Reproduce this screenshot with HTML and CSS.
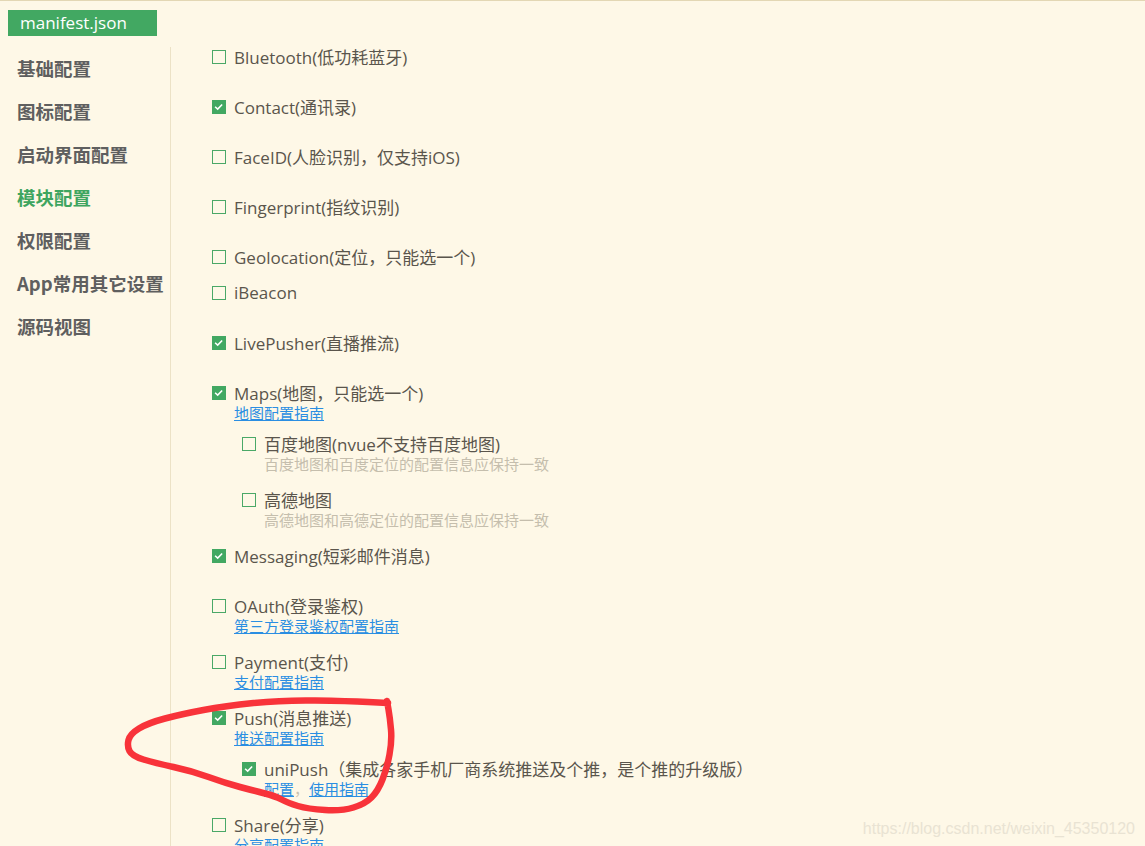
FILE: index.html
```html
<!DOCTYPE html>
<html lang="zh-CN">
<head>
    <meta charset="UTF-8">
    <title>manifest.json</title>
    <link rel="stylesheet" href="styles.css">
</head>
<body>
    <div class="topbar">
        <span class="tab">manifest.json</span>
    </div>

    <div class="main">
        <nav class="side">
            <div class="side-item">基础配置</div>
            <div class="side-item">图标配置</div>
            <div class="side-item">启动界面配置</div>
            <div class="side-item active">模块配置</div>
            <div class="side-item">权限配置</div>
            <div class="side-item">App常用其它设置</div>
            <div class="side-item">源码视图</div>
        </nav>

        <div class="content">
            <div class="item plain">
                <label class="title"><span class="box"></span>Bluetooth(低功耗蓝牙)</label>
            </div>
            <div class="item plain">
                <label class="title"><span class="box on"></span>Contact(通讯录)</label>
            </div>
            <div class="item plain">
                <label class="title"><span class="box"></span>FaceID(人脸识别，仅支持iOS)</label>
            </div>
            <div class="item plain">
                <label class="title"><span class="box"></span>Fingerprint(指纹识别)</label>
            </div>
            <div class="item">
                <label class="title"><span class="box"></span>Geolocation(定位，只能选一个)</label>
            </div>
            <div class="item plain">
                <label class="title"><span class="box"></span>iBeacon</label>
            </div>
            <div class="item plain">
                <label class="title"><span class="box on"></span>LivePusher(直播推流)</label>
            </div>
            <div class="item">
                <label class="title"><span class="box on"></span>Maps(地图，只能选一个)</label>
                <div class="sub"><a href="#">地图配置指南</a></div>
                <div class="children">
                    <div class="item">
                        <label class="title"><span class="box"></span>百度地图(nvue不支持百度地图)</label>
                        <div class="sub desc">百度地图和百度定位的配置信息应保持一致</div>
                    </div>
                    <div class="item">
                        <label class="title"><span class="box"></span>高德地图</label>
                        <div class="sub desc">高德地图和高德定位的配置信息应保持一致</div>
                    </div>
                </div>
            </div>
            <div class="item plain">
                <label class="title"><span class="box on"></span>Messaging(短彩邮件消息)</label>
            </div>
            <div class="item">
                <label class="title"><span class="box"></span>OAuth(登录鉴权)</label>
                <div class="sub"><a href="#">第三方登录鉴权配置指南</a></div>
            </div>
            <div class="item">
                <label class="title"><span class="box"></span>Payment(支付)</label>
                <div class="sub"><a href="#">支付配置指南</a></div>
            </div>
            <div class="item">
                <label class="title"><span class="box on"></span>Push(消息推送)</label>
                <div class="sub"><a href="#">推送配置指南</a></div>
                <div class="children">
                    <div class="item">
                        <label class="title"><span class="box on"></span>uniPush（集成各家手机厂商系统推送及个推，是个推的升级版）</label>
                        <div class="sub"><a href="#">配置</a><span class="sep">，</span><a href="#">使用指南</a></div>
                    </div>
                </div>
            </div>
            <div class="item">
                <label class="title"><span class="box"></span>Share(分享)</label>
                <div class="sub"><a href="#">分享配置指南</a></div>
            </div>
        </div>
    </div>

    <!-- hand drawn mark over the Push block -->
    <svg class="mark" width="1145" height="846" viewBox="0 0 1145 846">
        <path d="M388,702 L368,701 Q348,700 315,699.5 Q282,699 253.5,702 Q225,705 203.5,709 Q182,713 165,717.5 Q148,722 139,727.5 Q130,733 128.5,739 Q127,745 129.5,750 Q132,755 143.5,758.5 Q155,762 173.5,766 Q192,770 208.5,776 Q225,782 240,786 Q255,790 265,792.5 Q275,795 281.5,798.5 Q288,802 298,805 Q308,808 325,809 Q342,810 353.5,806.5 Q365,803 371.5,796.5 Q378,790 382.5,778.5 Q387,767 389.5,753.5 Q392,740 391,728.5 Q390,717 388.5,708.5 L387,700"
              fill="none" stroke="#f8333a" stroke-width="6.5" stroke-linecap="round" stroke-linejoin="round"/>
    </svg>

    <div class="watermark">https://blog.csdn.net/weixin_45350120</div>
</body>
</html>
```

FILE: styles.css
```css
html, body {
    margin: 0;
    height: 100%;
    overflow: hidden;
}
body {
    position: relative;
    background-color: #fef8e7;
    border-top: 1px solid #e3d7b4;
    font-family: "Open Sans", "Noto Sans CJK SC", sans-serif;
    color: #5a554c;
    box-sizing: border-box;
}
.topbar {
    padding: 9px 0 10px 8px;
    height: 27px;
}
.tab {
    display: inline-block;
    box-sizing: border-box;
    width: 149px;
    height: 26px;
    line-height: 26px;
    padding-left: 12px;
    background-color: #42a862;
    color: #fff;
    font-size: 17px;
}
.main {
    display: flex;
}
.side {
    width: 171px;
    box-sizing: border-box;
    padding-left: 17px;
    border-right: 1px solid #ece2c6;
    min-height: 800px;
}
.side-item {
    font-family: "Noto Sans CJK SC", sans-serif;
    font-weight: bold;
    font-size: 18.5px;
    line-height: 43px;
    color: #5f5f5f;
    white-space: nowrap;
}
.side-item.active {
    color: #3ea55f;
}
.content {
    margin-top: -2px;
    padding-left: 41px;
}
.item {
    margin-bottom: 14px;
}
.item.plain {
    margin-bottom: 28px;
}
.title {
    display: flex;
    align-items: center;
    gap: 8px;
    height: 22px;
    font-size: 17px;
    white-space: nowrap;
}
.box {
    flex: none;
    width: 14px;
    height: 14px;
    box-sizing: border-box;
    border: 1.5px solid #4aa867;
    margin-top: 1px;
}
.box.on {
    background-color: #42a862;
    border-color: #42a862;
    background-image: url("data:image/svg+xml;utf8,<svg xmlns='http://www.w3.org/2000/svg' width='14' height='14'><polyline points='3.5,7 6,9.3 10.3,4.8' fill='none' stroke='white' stroke-width='1.5'/></svg>");
    background-position: -1.5px -1.5px;
    background-repeat: no-repeat;
}
.sub {
    padding-left: 22px;
    font-size: 15px;
    line-height: 20px;
    white-space: nowrap;
}
.sub a {
    color: #2a8ee2;
}
.sep {
    color: #c9c2b0;
}
.desc {
    color: #c5bead;
}
.children {
    margin-top: 9px;
    padding-left: 30px;
}
.mark {
    position: absolute;
    top: 0;
    left: 0;
    pointer-events: none;
}
.watermark {
    position: absolute;
    right: 10px;
    bottom: 8px;
    font-family: "Liberation Sans", Arial, sans-serif;
    font-size: 16px;
    color: #e9e3d3;
}
```
